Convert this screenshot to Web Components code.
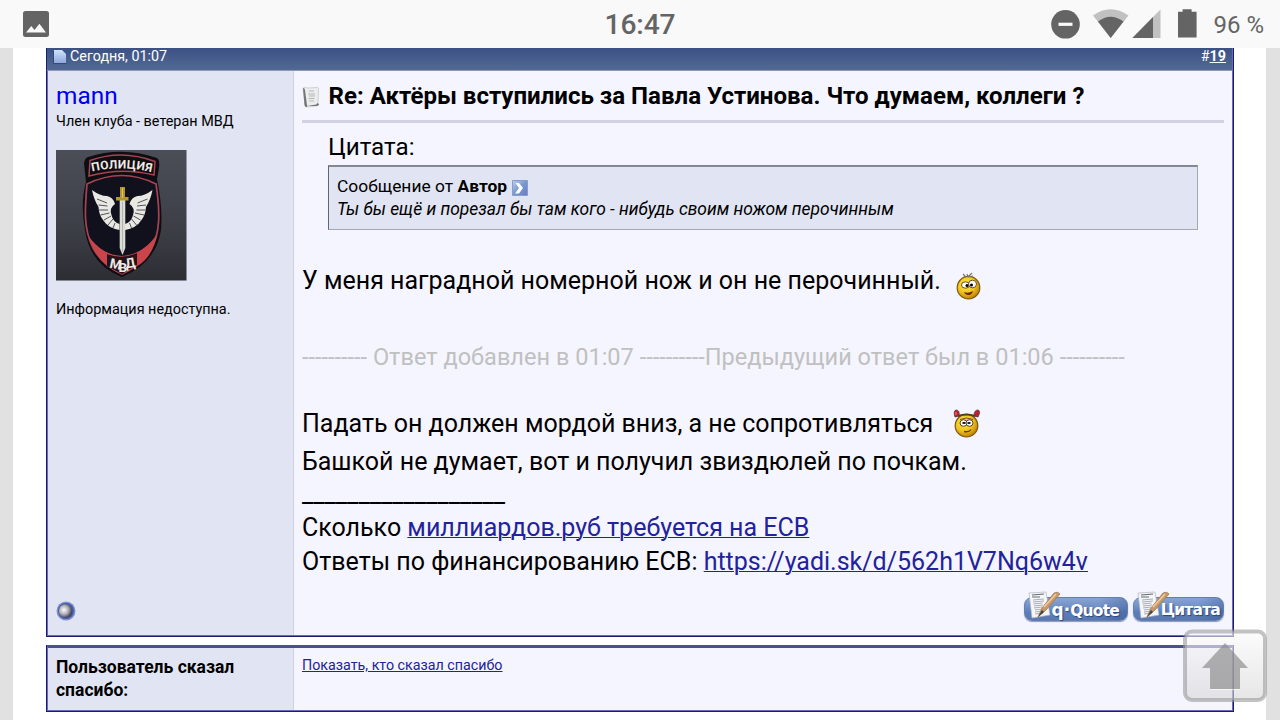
<!DOCTYPE html>
<html lang="ru">
<head>
<meta charset="utf-8">
<title>Форум</title>
<style>
  html, body { margin: 0; height: 720px; overflow: hidden; }
  body {
    background: #fff;
    color: #000;
    font-family: Roboto, "Noto Sans", sans-serif;
    --navy: #1c1c6d;
    --alt1: #f5f5ff;
    --alt2: #e1e4f2;
    --line: #d1d1e1;
    --link: #22229c;
  }
</style>
</head>
<body>
<forum-page>
  <status-bar slot="status" time="16:47" battery="96 %"></status-bar>
  <forum-post date="Сегодня, 01:07" number="19">
    <user-card slot="user" name="mann" rank="Член клуба - ветеран МВД" info="Информация недоступна."><police-avatar></police-avatar></user-card>
    <post-title slot="body">Re: Актёры вступились за Павла Устинова. Что думаем, коллеги ?</post-title>
    <quote-box slot="body" author="Автор">Ты бы ещё и порезал бы там кого - нибудь своим ножом перочинным</quote-box>
    <post-line slot="body" style="--gap:32px">У меня наградной номерной нож и он не перочинный.<smile-icon kind="wink"></smile-icon></post-line>
    <post-line slot="body" style="--gap:38px;--size:23.55px;color:#c0c0c0">---------- Ответ добавлен в 01:07 ----------Предыдущий ответ был в 01:06 ----------</post-line>
    <post-line slot="body" style="--gap:29px">Падать он должен мордой вниз, а не сопротивляться<smile-icon kind="devil"></smile-icon></post-line>
    <post-line slot="body">Башкой не думает, вот и получил звиздюлей по почкам.</post-line>
    <post-line slot="body" style="--h:24px;--gap:1px">__________________</post-line>
    <post-line slot="body" style="--gap:5px;--h:34px">Сколько <text-link>миллиардов.руб требуется на ЕСВ</text-link></post-line>
    <post-line slot="body" style="--h:34px">Ответы по финансированию ЕСВ: <text-link>https://yadi.sk/d/562h1V7Nq6w4v</text-link></post-line>
    <post-button slot="actions" style="width:104px;--pad:8px"><span style="font-size:17px;letter-spacing:0">q·</span>Quote</post-button>
    <post-button slot="actions" style="width:91px;--pad:3px">Цитата</post-button>
  </forum-post>
  <thanks-panel label="Пользователь сказал спасибо:"><text-link>Показать, кто сказал спасибо</text-link></thanks-panel>
  <scroll-top slot="overlay"></scroll-top>
</forum-page>

<script>
class BaseElement extends HTMLElement {
  constructor() {
    super();
    this.attachShadow({ mode: 'open' }).innerHTML = this.render();
  }
  attr(name) { return this.getAttribute(name) || ''; }
}

class ForumPage extends BaseElement {
  render() {
    return `
    <style>
      :host { display: flex; flex-direction: column; height: 720px; }
      .page {
        flex: 1;
        box-sizing: border-box;
        border: solid #e1e1e1;
        border-width: 0 14px 0 13px;
        padding: 0 32px 0 33px;
        display: flex;
        flex-direction: column;
        gap: 8px;
      }
    </style>
    <slot name="status"></slot>
    <div class="page"><slot></slot></div>
    <slot name="overlay"></slot>`;
  }
}

class StatusBar extends BaseElement {
  render() {
    return `
    <style>
      :host {
        display: grid;
        grid-template-columns: 1fr auto 1fr;
        align-items: center;
        height: 48px;
        box-sizing: border-box;
        padding: 0 16px;
        background: #f9f9f9;
        color: #646464;
      }
      svg { display: block; fill: #646464; }
      .photo { margin-left: 7px; }
      .time { font-size: 28.2px; font-weight: 500; padding-top: 1px; letter-spacing: -.1px; }
      .right { display: flex; justify-content: flex-end; align-items: center; }
      .bat { font-size: 24px; padding-top: 2px; margin-left: 16px; }
    </style>
    <svg class="photo" width="26" height="26" viewBox="0 0 26 26"><path fill-rule="evenodd" d="M2.500 0h21Q26 0 26 2.500v21q0 2.500-2.500 2.500h-21Q0 26 0 23.500v-21Q0 0 2.500 0zM3 21.500h20l-6.600-8.800-4.900 6.200-3.200-3.900z"/></svg>
    <span class="time">${this.attr('time')}</span>
    <div class="right">
      <svg width="146" height="48" viewBox="0 0 146 48">
        <circle cx="14.500" cy="24.300" r="14.300"/><path fill="#f9f9f9" d="M7.500 22.700h14v3.200h-14z"/>
        <path fill="#c1c1c1" d="M42 15.500Q59.500 3 77.500 15.500L59.700 38z"/>
        <path d="M47 21.500Q59.500 12 72.500 21.500L59.700 38z"/>
        <path fill="#c1c1c1" d="M109.500 9.500V38H81z"/>
        <path d="M102 17v21H81.500z"/>
        <path d="M127 11.700h4.600V9.300h9v2.400h5V37.500H127z"/>
      </svg>
      <span class="bat">${this.attr('battery')}</span>
    </div>`;
  }
}

class ForumPost extends BaseElement {
  render() {
    return `
    <style>
      :host {
        display: flex;
        flex-direction: column;
        box-sizing: border-box;
        height: 589px;
        border: solid var(--navy);
        border-width: 0 1px 1px 1px;
        outline: 0;
        background: var(--alt1);
      }
      .head {
        display: flex;
        justify-content: space-between;
        height: 22px;
        padding: 0 6px 0 6px;
        background: linear-gradient(#3b5184, #536994);
        border-bottom: 1px solid #9297b6;
        border-right: 1px solid #6a6ab0;
        color: #fff;
        font-size: 14.3px;
        line-height: 17px;
      }
      .date { display: flex; gap: 3px; }
      .date svg { margin-top: 2px; }
      b { text-decoration: underline; }
      .cells { flex: 1; display: flex; border: solid #6a6abb; border-width: 0 1px 1px; }
      .user { width: 245px; background: var(--alt2); border-right: 1px solid var(--line); }
      .body { flex: 1; display: flex; flex-direction: column; padding: 0 8px; }
      .actions { display: flex; justify-content: flex-end; gap: 5px; margin: auto 0 13px; }
    </style>
    <div class="head">
      <span class="date"><svg width="14" height="14" viewBox="0 0 14 14"><defs><linearGradient id="g" x2="0" y2="1"><stop stop-color="#cfe4fa"/><stop offset="1" stop-color="#8fa7dc"/></linearGradient></defs><path d="M1 0h8l4 4v9H1z" fill="url(#g)"/><path d="M.5 1v12.500h13" fill="none" stroke="#34487d"/></svg>${this.attr('date')}</span>
      <span>#<b>${this.attr('number')}</b></span>
    </div>
    <div class="cells">
      <div class="user"><slot name="user"></slot></div>
      <div class="body"><slot name="body"></slot><div class="actions"><slot name="actions"></slot></div></div>
    </div>`;
  }
}

class UserCard extends BaseElement {
  render() {
    return `
    <style>
      :host { display: flex; flex-direction: column; height: 100%; padding-left: 8px; box-sizing: border-box; font-size: 14.4px; white-space: nowrap; }
      .name { color: #0000f0; font-size: 24.4px; line-height: 30px; margin-top: 10px; }
      .rank { line-height: 20px; margin: 1px 0 18px; }
      .info { line-height: 20px; margin-top: 19px; }
      .state { display: block; margin: auto 0 14px; }
    </style>
    <div class="name">${this.attr('name')}</div>
    <div class="rank">${this.attr('rank')}</div>
    <slot></slot>
    <div class="info">${this.attr('info')}</div>
    <svg class="state" width="20" height="20" viewBox="0 0 20 20">
      <defs><radialGradient id="b" cx=".38" cy=".42" r=".65"><stop stop-color="#fff"/><stop offset=".5" stop-color="#b2b1b6"/><stop offset="1" stop-color="#2f3150"/></radialGradient></defs>
      <circle cx="10" cy="10" r="9.500" fill="#7d90cf"/><circle cx="10" cy="10" r="8" fill="#485aa0"/><circle cx="9.500" cy="10" r="6.700" fill="url(#b)"/>
    </svg>`;
  }
}

class PoliceAvatar extends BaseElement {
  render() {
    // right wing is the left one mirrored around the sword
    return `
    <style>
      :host { display: block; width: 131px; height: 131px; }
      svg { display: block; }
      text { font: bold 12px Roboto, sans-serif; fill: #eeeae6; }
    </style>
    <svg width="131" height="131" viewBox="0 0 131 131">
      <defs>
        <linearGradient id="bg" x2="0" y2="1"><stop stop-color="#4b4e57"/><stop offset=".6" stop-color="#3d3f47"/><stop offset="1" stop-color="#2d2e34"/></linearGradient>
        <path id="top" d="M36 21.500Q66.500 15 97 22.500"/>
        <g id="wing">
          <path d="M36 40Q44 46 51 46Q57 47 59 54Q53 58 55.500 65Q57 72 63.500 74V80Q52 78 47 70Q43 65 42.500 57Q38 50 36 40z" fill="#e9e8e2"/>
          <path d="M41 49l10 4M42.500 55l9 1M43 60l9 0M44.500 65l9-2M48 70l7-4M52 75l5-6M57 78l2-5" stroke="#282d3c" stroke-width=".800"/>
        </g>
      </defs>
      <path fill="url(#bg)" d="M0 0h130.500v130.500H0z"/>
      <path d="M32 7Q66-4 101 8Q104 10 103 18L101 29Q107 58 105 80Q100 113 66 127Q34 115 29 80Q24 54 30 32L28 13Q29 8 32 7z" fill="#100d12"/>
      <path d="M34 10.500Q66-1 99 11.500L98 25Q66 17 33 26z" fill="none" stroke="#a54452" stroke-width="1.500"/>
      <path d="M31 34Q66 17 100 34C104 60 105 84 94 101Q84 116 66 124Q46 115 37 98C27 78 29 58 31 34z" fill="#10111d" stroke="#a54452" stroke-width="1.700"/>
      <path d="M32.500 86Q46 105 66 106Q88 104 101 84Q97 106 83 115L66 124Q42 116 32.500 86z" fill="#c9444b"/>
      <path d="M51 104q15 6 30-1v12l-15 9-15-8z" fill="#241318"/>
      <use href="#wing"/><use href="#wing" transform="matrix(-1 0 0 1 132.500 0)"/>
      <path d="M63.700 50h5.600v48l-2.800 7-2.800-7z" fill="#dcdcd6"/><path d="M66.500 52v50" stroke="#aaa9a2" stroke-width=".800"/>
      <path d="M64 37h5v10h3.500v3.500H60V47h4z" fill="#b3972c"/><path d="M66.500 38v10" stroke="#ddc857"/>
      <text><textPath href="#top" textLength="60">ПОЛИЦИЯ</textPath></text>
      <text style="font-size:13.5px" x="53 62.500 70" y="117.500 121.500 118.500" rotate="12 0 -10">МВД</text>
    </svg>`;
  }
}

class PostTitle extends BaseElement {
  render() {
    return `
    <style>
      :host {
        display: flex;
        align-items: center;
        gap: 8.500px;
        height: 49px;
        border-bottom: 3px solid var(--line);
        font-size: 24.050px;
        font-weight: 700;
        white-space: nowrap;
      }
      svg { flex: none; margin-top: 3px; }
    </style>
    <svg width="18" height="22" viewBox="0 0 18 22"><path d="M1 2q3-1 5 0l9-.5q2 0 1.500 2L16 18q0 2-2 2L5 21Q3 21 3 19z" fill="#eceeed" stroke="#c7c7c7" stroke-width=".800"/><path d="M1 2q2 0 2 2l2 15q1 2-1 2-1 0-1.500-2zM5 20l9-1.500q1 0 1-1.500l2 1q0 2-3 2z" fill="#777"/><path d="M7 5h5M6 8h7M7 10h6M6.500 12.500h6M7 15h5" stroke="#b5b5b5"/></svg>
    <span><slot></slot></span>`;
  }
}

class QuoteBox extends BaseElement {
  render() {
    return `
    <style>
      :host { display: block; margin: 6px 26px 0; white-space: nowrap; }
      .label { font-size: 24.200px; line-height: 36px; }
      .box {
        border: 1px solid #a5a7b2;
        border-top: 2px solid #858792;
        border-left-color: #63656f;
        background: var(--alt2);
        padding: 8px 8px 8px;
        font-size: 17.400px;
        line-height: 23px;
      }
      .from { display: flex; align-items: center; height: 23px; }
      b { margin: 0 5px 0 4.500px; }
      svg { margin-top: 3px; }
    </style>
    <div class="label">Цитата:</div>
    <div class="box">
      <div class="from">Сообщение от <b>${this.attr('author')}</b><svg width="16" height="16" viewBox="0 0 16 16"><defs><linearGradient id="g" x2="1" y2="1"><stop stop-color="#bed0ec"/><stop offset=".5" stop-color="#7798ce"/><stop offset="1" stop-color="#6a7bc8"/></linearGradient></defs><path d="M.5.5h15v15H.5z" fill="url(#g)" stroke="#899dcd"/><path d="M3.500 3H7l4 5-4 5.500H3L7 8z" fill="#fff"/></svg></div>
      <i><slot></slot></i>
    </div>`;
  }
}

class PostLine extends BaseElement {
  render() {
    return `
    <style>
      :host {
        display: block;
        margin-top: var(--gap, 0);
        height: var(--h, 38px);
        line-height: var(--h, 38px);
        font-size: var(--size, 25px);
        white-space: nowrap;
      }
    </style><slot></slot>`;
  }
}

class TextLink extends BaseElement {
  render() {
    return `<style>:host { display: inline; color: var(--link); } a { text-decoration: underline; text-decoration-thickness: 1.3px; }</style><a><slot></slot></a>`;
  }
}

class SmileIcon extends BaseElement {
  render() {
    const extras = {
      wink: `<path d="M10 5L7 2M12 5l4-4M12 5l5-1M12 5l-1-3" stroke="#77736a" stroke-width="1.100"/>
        <ellipse cx="9.500" cy="13" rx="4" ry="3.200" fill="#fff" stroke="#6e4b19"/><ellipse cx="16.500" cy="12" rx="4" ry="3.800" fill="#fff" stroke="#6e4b19"/><circle cx="11" cy="13.500" r="1.500"/><circle cx="15.500" cy="13" r="1.500"/>
        <path d="M8 20q4 2 9-1-1 4-4.500 4-3.500 0-4.500-3z" fill="#68240c"/>`,
      devil: `<path d="M1 7Q-1 1 2 0q4 0 3 6zM24 7q3-6 0-7-4 0-4 6z" fill="#c6202f" stroke="#5c2a35" stroke-width=".800"/><path d="M4 6q8.500-3 17 0" fill="none" stroke="#554014" stroke-width="2"/>
        <path d="M2 2v3" stroke="#ff777c"/><ellipse cx="9.500" cy="13" rx="3.500" ry="3.300" fill="#fff" stroke="#5a3c25"/><ellipse cx="15.500" cy="13" rx="3.500" ry="3.300" fill="#fff" stroke="#5a3c25"/><path d="M8.500 13h3M13.500 13h3" stroke="#222" stroke-width="2.200"/><path d="M6 9.500q6.500-3 13 0" fill="none" stroke="#73501d"/>
        <path d="M10 21.500q5 1 7-2" fill="none" stroke="#6c3b0c" stroke-width="1.300"/>`
    };
    return `
    <style>
      :host { display: inline-block; width: 26px; height: 28px; margin-left: 15px; vertical-align: -11px; line-height: 0; }
      :host([kind="devil"]) { margin-left: 21px; vertical-align: -6px; }
      svg { overflow: visible; }
    </style>
    <svg width="26" height="28" viewBox="0 0 26 28">
      <defs><radialGradient id="f" cx=".4" cy=".35" r=".65"><stop stop-color="#ffe94a"/><stop offset=".6" stop-color="#efc31b"/><stop offset="1" stop-color="#c08209"/></radialGradient></defs>
      <circle cx="12.500" cy="15.700" r="11.300" fill="url(#f)" stroke="#80570f" stroke-width="1.200"/>${extras[this.attr('kind')]}
    </svg>`;
  }
}

class PostButton extends BaseElement {
  render() {
    return `
    <style>
      :host { display: flex; height: 30px; align-items: flex-end; }
      .pill {
        display: flex;
        justify-content: flex-end;
        box-sizing: border-box;
        width: 100%;
        height: 24px;
        margin-bottom: 1px;
        padding-right: var(--pad);
        border: 1px solid #6480b2;
        border-radius: 8px;
        background: linear-gradient(100deg, transparent 70%, #33549166), linear-gradient(#89a4d2, #7090c7 40%, #5c7db8 65%, #5a78b0);
        box-shadow: 0 1px 1px #8a95b8;
        color: #fff;
        font: bold 15.5px/24px "DejaVu Sans", sans-serif;
        letter-spacing: -.8px;
        text-shadow: 1px 1px 1px #25477f;
        white-space: nowrap;
      }
      svg { position: absolute; margin-bottom: 1px; }
    </style>
    <div class="pill"><span><slot></slot></span></div>
    <svg width="38" height="30" viewBox="0 0 38 30">
      <path d="M5 2l17-1 4 23-18 3z" fill="#f5f6f8" stroke="#b2b6bc" stroke-width=".700"/>
      <path d="M8 4l12-1M8 6h8" stroke="#626a72" stroke-width="1.200"/>
      <path d="M9 9l11-1M9 11l11-1M9.500 13l9-1M10 15l9-1M10 17l8-1M11 19l8-1M11 21l9-1M11 23l8-1" stroke="#a0a6af" stroke-width=".900"/>
      <path d="M14 26l4-9L30 2q4-2 6 1L22 19z" fill="#c79968" stroke="#a07850" stroke-width=".800"/>
      <path d="M20 16L32 3" stroke="#efcb9b" stroke-width="1.600"/><path d="M14 26l4-7 2 2z" fill="#444"/>
    </svg>`;
  }
}

class ThanksPanel extends BaseElement {
  render() {
    return `
    <style>
      :host {
        display: flex;
        box-sizing: border-box;
        height: 67px;
        border: 1px solid var(--navy);
        border-top-width: 0;
        background: var(--alt1);
      }
      .row { flex: 1; display: flex; border: 1px solid #6a6abb; border-top: 3px solid #4a4f9a; }
      .label {
        box-sizing: border-box;
        width: 246px;
        padding: 8px 40px 0 8px;
        background: var(--alt2);
        border-right: 1px solid var(--line);
        font-size: 17.500px;
        font-weight: 700;
        line-height: 23px;
      }
      .names { padding: 7px 8px; font-size: 14.280px; line-height: 20px; }
    </style>
    <div class="row">
      <div class="label">${this.attr('label')}</div>
      <div class="names"><slot></slot></div>
    </div>`;
  }
}

class ScrollTop extends BaseElement {
  render() {
    return `
    <style>
      :host { position: absolute; left: 1183px; top: 629px; }
      svg { display: block; }
    </style>
    <svg width="84" height="73" viewBox="0 0 84 73">
      <defs><linearGradient id="g" x2="0" y2="1"><stop stop-color="#fafafa"/><stop offset="1" stop-color="#d5d5d5"/></linearGradient></defs>
      <rect x="2" y="2.500" width="80" height="68.500" rx="7" fill="url(#g)" fill-opacity=".6" stroke="#989898" stroke-opacity=".58" stroke-width="4"/>
      <path d="M42 14l23 25h-8v21H27V39h-8z" fill="#8c8c8e" fill-opacity=".68"/>
      <path d="M27 60.500h30" stroke="#fff" stroke-opacity=".6"/>
    </svg>`;
  }
}

customElements.define('forum-page', ForumPage);
customElements.define('status-bar', StatusBar);
customElements.define('forum-post', ForumPost);
customElements.define('user-card', UserCard);
customElements.define('police-avatar', PoliceAvatar);
customElements.define('post-title', PostTitle);
customElements.define('quote-box', QuoteBox);
customElements.define('post-line', PostLine);
customElements.define('text-link', TextLink);
customElements.define('smile-icon', SmileIcon);
customElements.define('post-button', PostButton);
customElements.define('thanks-panel', ThanksPanel);
customElements.define('scroll-top', ScrollTop);
</script>
</body>
</html>
